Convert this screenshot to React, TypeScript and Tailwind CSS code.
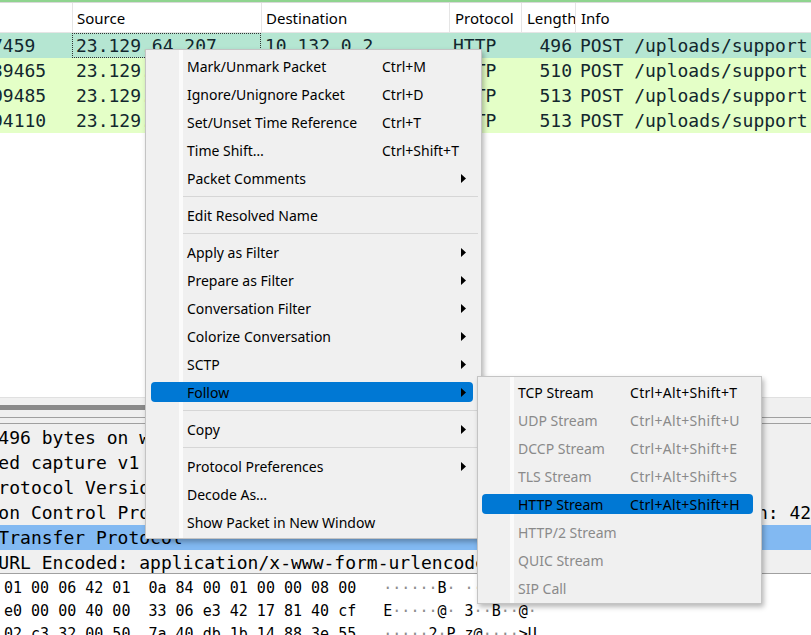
import React from "react";

const MONO = "font-['DejaVu_Sans_Mono',monospace]";
const SANS = "font-['Noto_Sans',sans-serif]";

type MI =
  | { label: string; shortcut?: string; arrow?: boolean; active?: boolean; disabled?: boolean }
  | "sep";

const mainItems: MI[] = [
  { label: "Mark/Unmark Packet", shortcut: "Ctrl+M" },
  { label: "Ignore/Unignore Packet", shortcut: "Ctrl+D" },
  { label: "Set/Unset Time Reference", shortcut: "Ctrl+T" },
  { label: "Time Shift…", shortcut: "Ctrl+Shift+T" },
  { label: "Packet Comments", arrow: true },
  "sep",
  { label: "Edit Resolved Name" },
  "sep",
  { label: "Apply as Filter", arrow: true },
  { label: "Prepare as Filter", arrow: true },
  { label: "Conversation Filter", arrow: true },
  { label: "Colorize Conversation", arrow: true },
  { label: "SCTP", arrow: true },
  { label: "Follow", arrow: true, active: true },
  "sep",
  { label: "Copy", arrow: true },
  "sep",
  { label: "Protocol Preferences", arrow: true },
  { label: "Decode As…" },
  { label: "Show Packet in New Window" },
];

const subItems: MI[] = [
  { label: "TCP Stream", shortcut: "Ctrl+Alt+Shift+T" },
  { label: "UDP Stream", shortcut: "Ctrl+Alt+Shift+U", disabled: true },
  { label: "DCCP Stream", shortcut: "Ctrl+Alt+Shift+E", disabled: true },
  { label: "TLS Stream", shortcut: "Ctrl+Alt+Shift+S", disabled: true },
  { label: "HTTP Stream", shortcut: "Ctrl+Alt+Shift+H", active: true },
  { label: "HTTP/2 Stream", disabled: true },
  { label: "QUIC Stream", disabled: true },
  { label: "SIP Call", disabled: true },
];

function Arrow() {
  return (
    <svg width="5" height="9" viewBox="0 0 5 9" className="mr-[7px] shrink-0">
      <path d="M0 0 L5 4.5 L0 9 Z" fill="#000" />
    </svg>
  );
}

function MainMenu() {
  return (
    <div
      className={`absolute left-[145px] top-[49px] w-[337px] bg-[#f0f0f0] border border-[#c4c4c4] pt-[2px] pb-[2px] shadow-[2px_3px_5px_rgba(0,0,0,0.28)] ${SANS} text-[14px] text-[#000]`}
    >
      <div className="absolute left-[33px] top-0 bottom-0 w-[4px] bg-[#fbfbfb]" />
      {mainItems.map((it, i) =>
        it === "sep" ? (
          <div key={i} className="relative h-[9px] pt-[4px]">
            <div className="ml-[37px] mr-[3px] h-px bg-[#d6d6d6]" />
          </div>
        ) : (
          <div key={i} className="relative h-[28px] py-[4px] pl-[5px] pr-[8px]">
            <div
              className={`h-[20px] rounded-[4px] flex items-center ${it.active ? "bg-[#0078d4]" : ""}`}
            >
              <span className="pl-[36px] w-[231px] shrink-0 whitespace-nowrap leading-[20px] pt-[1px]">{it.label}</span>
              <span className="flex-1 whitespace-nowrap leading-[20px] pt-[1px]">{it.shortcut ?? ""}</span>
              {it.arrow && <Arrow />}
            </div>
          </div>
        )
      )}
    </div>
  );
}

function SubMenu() {
  return (
    <div
      className={`absolute left-[477px] top-[376px] w-[285px] bg-[#f0f0f0] border border-[#c4c4c4] pt-[1px] pb-[1px] shadow-[2px_3px_5px_rgba(0,0,0,0.28)] ${SANS} text-[14px]`}
    >
      <div className="absolute left-[32px] top-0 bottom-0 w-[4px] bg-[#fbfbfb]" />
      {subItems.map((it, i) =>
        it === "sep" ? null : (
          <div key={i} className="relative h-[28px] py-[4px] pl-[4px] pr-[8px]">
            <div
              className={`h-[20px] rounded-[4px] flex items-center ${it.active ? "bg-[#0078d4]" : ""} ${
                it.disabled ? "text-[#8a8a8a]" : "text-[#000]"
              }`}
            >
              <span className="pl-[36px] w-[148px] shrink-0 whitespace-nowrap leading-[20px] pt-[1px]">{it.label}</span>
              <span className="flex-1 whitespace-nowrap leading-[20px] pt-[1px] tracking-[0.3px]">{it.shortcut ?? ""}</span>
            </div>
          </div>
        )
      )}
    </div>
  );
}

const rows = [
  { t: "7459", len: "496", sel: true },
  { t: "39465", len: "510" },
  { t: "09485", len: "513" },
  { t: "94110", len: "513" },
];

function PacketRow({ t, len, sel }: { t: string; len: string; sel?: boolean }) {
  return (
    <div
      className={`flex h-[25px] shrink-0 items-center ${sel ? "bg-[#b5e6d2]" : "bg-[#e4ffc7]"} text-[#12272e] ${MONO} text-[18px] whitespace-nowrap`}
    >
      <div className="w-[72px] shrink-0 overflow-hidden">
        <span className="block ml-[-8px]">{t}</span>
      </div>
      <div
        className={`w-[189px] shrink-0 h-full flex items-center overflow-hidden ${
          sel ? "border border-dotted border-[#333] pl-[3px]" : "pl-[4px]"
        }`}
      >
        23.129.64.207
      </div>
      <div className="w-[188px] shrink-0 pl-[4px] overflow-hidden">10.132.0.2</div>
      <div className="w-[72px] shrink-0 pl-[4px] overflow-hidden">HTTP</div>
      <div className="w-[54px] shrink-0 pr-[3px] text-right overflow-hidden">{len}</div>
      <div className="flex-1 pl-[5px] overflow-hidden">
        POST /uploads/support.php HTTP/1.1  (application/x-www-form-urlencoded)
      </div>
    </div>
  );
}

const detailRows = [
  "Frame 17: 496 bytes on wire (3968 bits), 496 bytes captured (3968 bits)",
  "Linux cooked capture v1",
  "Internet Protocol Version 4, Src: 23.129.64.207, Dst: 10.132.0.2",
  "Transmission Control Protocol, Src Port: 49970, Dst Port: 80, Seq: 1, Ack: 1, Len: 428",
  "Hypertext Transfer Protocol",
  "HTML Form URL Encoded: application/x-www-form-urlencoded",
];

const hexRows = [
  { hex: "01 00 06 42 01  0a 84 00 01 00 00 08 00", asc: "······B· ········" },
  { hex: "e0 00 00 40 00  33 06 e3 42 17 81 40 cf", asc: "E·····@· 3··B··@·" },
  { hex: "02 c3 32 00 50  7a 40 db 1b 14 88 3e 55", asc: "·····2·P z@····>U" },
];

export default function App() {
  return (
    <div className="relative w-[811px] h-[635px] overflow-hidden bg-white">
      <div className="flex flex-col h-full">
        {/* top accent */}
        <div className="h-[2px] bg-[#8fd48f] shrink-0" />
        <div className="h-px bg-[#d9d9d9] shrink-0" />
        {/* header */}
        <div className={`flex h-[30px] shrink-0 bg-white border-b border-[#e5e5e5] ${SANS} text-[15px] text-black`}>
          <div className="w-[72px] shrink-0" />
          <div className="w-[189px] shrink-0 border-l border-[#e5e5e5] pl-[4px] pt-[2px] flex items-center">Source</div>
          <div className="w-[188px] shrink-0 border-l border-[#e5e5e5] pl-[4px] pt-[2px] flex items-center">Destination</div>
          <div className="w-[72px] shrink-0 border-l border-[#e5e5e5] pl-[5px] pt-[2px] flex items-center">Protocol</div>
          <div className="w-[54px] shrink-0 border-l border-[#e5e5e5] pl-[5px] pt-[2px] flex items-center overflow-hidden whitespace-nowrap">
            Length
          </div>
          <div className="flex-1 border-l border-[#e5e5e5] pl-[5px] pt-[2px] flex items-center">Info</div>
        </div>
        {/* rows */}
        {rows.map((r, i) => (
          <PacketRow key={i} {...r} />
        ))}
        <div className="h-[264px] shrink-0 bg-white" />
        {/* splitter / scrollbar */}
        <div className="h-[28px] shrink-0 bg-[#f0f0f0] border-t border-[#e0e0e0] flex flex-col">
          <div className="h-[7px] shrink-0" />
          <div className="h-[5px] shrink-0 w-[700px] bg-[#8a8a8a]" />
          <div className="h-[7px] shrink-0" />
          <div className="h-px shrink-0 bg-[#a0a0a0]" />
          <div className="h-[5px] shrink-0" />
          <div className="h-px shrink-0 bg-[#a0a0a0]" />
        </div>
        {/* details */}
        <div className={`h-[148px] shrink-0 bg-[#f0f0f0] overflow-hidden ${MONO} text-[18px] text-black`}>
          {detailRows.map((d, i) => (
            <div
              key={i}
              className={`h-[25px] flex items-center whitespace-pre overflow-hidden ${i === 4 ? "bg-[#82b9f2]" : ""}`}
            >
              <span className="ml-[-110px]">{d}</span>
            </div>
          ))}
        </div>
        <div className="h-px bg-[#a0a0a0] shrink-0" />
        {/* hex */}
        <div className={`flex-1 bg-white pt-[3px] pl-[4px] ${MONO} text-[15px] text-black`}>
          {hexRows.map((h, i) => (
            <div key={i} className="h-[23px] flex items-center whitespace-pre">
              <span>{h.hex}</span>
              <span>{"   "}</span>
              {h.asc.split("").map((c, j) => (
                <span key={j} className={c === "·" ? "text-[#8c8c8c]" : ""}>
                  {c}
                </span>
              ))}
            </div>
          ))}
        </div>
      </div>
      <MainMenu />
      <SubMenu />
    </div>
  );
}
